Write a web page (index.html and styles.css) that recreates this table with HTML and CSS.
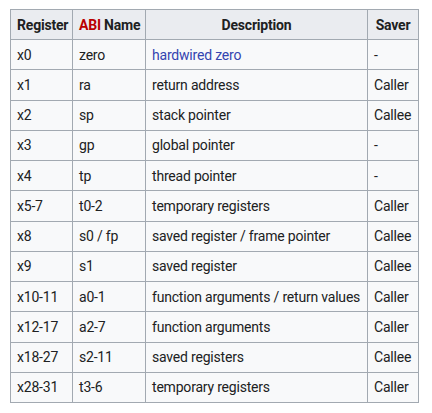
FILE: index.html
```html
<!DOCTYPE html>
<html>
<head>
<meta charset="utf-8">
<link rel="stylesheet" href="styles.css">
</head>
<body>
<table class="wikitable">
  <colgroup>
    <col class="c1"><col class="c2"><col class="c3"><col class="c4">
  </colgroup>
  <thead>
    <tr><th>Register</th><th><span class="redlink">ABI</span> Name</th><th>Description</th><th>Saver</th></tr>
  </thead>
  <tbody>
    <tr><td>x0</td><td>zero</td><td><span class="link">hardwired zero</span></td><td>-</td></tr>
    <tr><td>x1</td><td>ra</td><td>return address</td><td>Caller</td></tr>
    <tr><td>x2</td><td>sp</td><td>stack pointer</td><td>Callee</td></tr>
    <tr><td>x3</td><td>gp</td><td>global pointer</td><td>-</td></tr>
    <tr><td>x4</td><td>tp</td><td>thread pointer</td><td>-</td></tr>
    <tr><td>x5-7</td><td>t0-2</td><td>temporary registers</td><td>Caller</td></tr>
    <tr><td>x8</td><td>s0 / fp</td><td>saved register / frame pointer</td><td>Callee</td></tr>
    <tr><td>x9</td><td>s1</td><td>saved register</td><td>Callee</td></tr>
    <tr><td>x10-11</td><td>a0-1</td><td>function arguments / return values</td><td>Caller</td></tr>
    <tr><td>x12-17</td><td>a2-7</td><td>function arguments</td><td>Caller</td></tr>
    <tr><td>x18-27</td><td>s2-11</td><td>saved registers</td><td>Callee</td></tr>
    <tr><td>x28-31</td><td>t3-6</td><td>temporary registers</td><td>Caller</td></tr>
  </tbody>
</table>
</body>
</html>
```
FILE: styles.css
```css
html, body {
  margin: 0;
  padding: 0;
  background: #ffffff;
}
body {
  padding: 9px 0 0 10px;
  font-family: Roboto, "Liberation Sans", sans-serif;
  font-size: 14px;
  letter-spacing: -0.2px;
  color: #202122;
}
.wikitable {
  border-collapse: collapse;
  table-layout: fixed;
  width: 408px;
  background: #f8f9fa;
  border: 1px solid #a2a9b1;
}
.c1 { width: 62px; }
.c2 { width: 73px; }
.c3 { width: 222px; }
.c4 { width: 51px; }
.wikitable th,
.wikitable td {
  border: 1px solid #a2a9b1;
  padding: 0 6px;
  height: 29.25px;
  text-align: left;
  white-space: nowrap;
}
.wikitable th {
  background: #eaecf0;
  text-align: center;
  font-weight: bold;
  height: 29px;
}
.link { color: #3444b0; }
.redlink { color: #ba0000; }
```
